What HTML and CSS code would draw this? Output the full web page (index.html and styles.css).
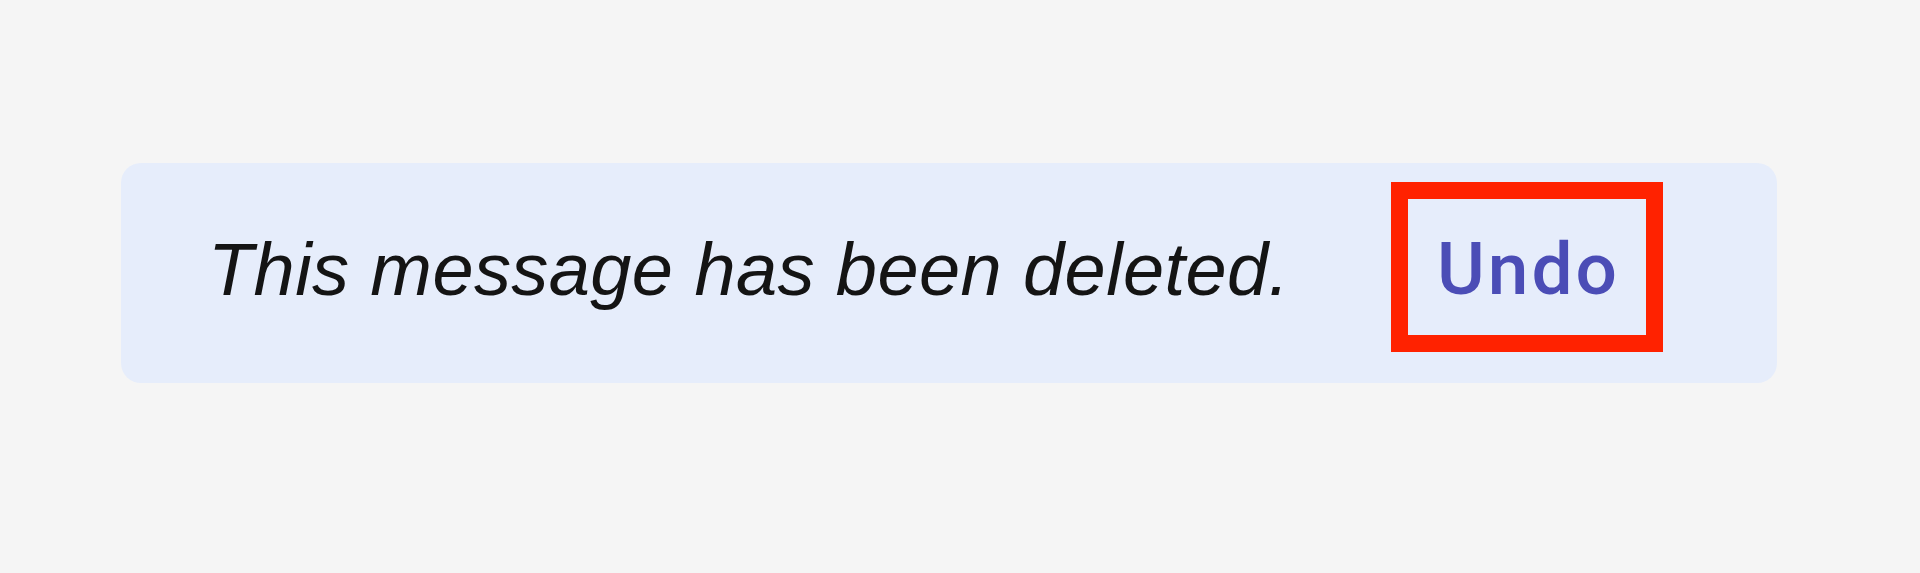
FILE: index.html
```html
<!DOCTYPE html>
<html lang="en">
<head>
<meta charset="utf-8">
<title>Message deleted</title>
<link rel="stylesheet" href="styles.css">
</head>
<body>
<div class="page">
  <div class="notice">
    <p class="notice-text">This message has been deleted.</p>
    <button class="undo" type="button"><span class="undo-label">Undo</span></button>
  </div>
</div>
</body>
</html>
```
FILE: styles.css
```css
html, body {
  margin: 0;
  padding: 0;
  background: #f5f5f5;
}
.page {
  width: 1920px;
  height: 573px;
  padding: 163px 0 0 121px;
  box-sizing: border-box;
}
.notice {
  width: 1656px;
  height: 220px;
  box-sizing: border-box;
  background: #e6edfb;
  border-radius: 20px;
  display: flex;
  align-items: flex-start;
  padding: 0 114px 0 87px;
}
.notice-text {
  margin: 70px 0 0 0;
  font-family: "Liberation Sans", Arial, sans-serif;
  font-style: italic;
  font-size: 74px;
  line-height: 74px;
  letter-spacing: 0.4px;
  color: #141414;
}
.undo {
  margin: 19px 0 0 auto;
  width: 272px;
  height: 170px;
  box-sizing: border-box;
  border: 17px solid #ff2200;
  background: transparent;
  padding: 0;
  display: flex;
  align-items: center;
  justify-content: center;
  cursor: pointer;
}
.undo-label {
  font-family: Roboto, "Liberation Sans", Arial, sans-serif;
  font-weight: 500;
  font-size: 73px;
  letter-spacing: 3px;
  color: #4b4db6;
  line-height: 1;
  margin: 5px 0 0 3px;
}
```
